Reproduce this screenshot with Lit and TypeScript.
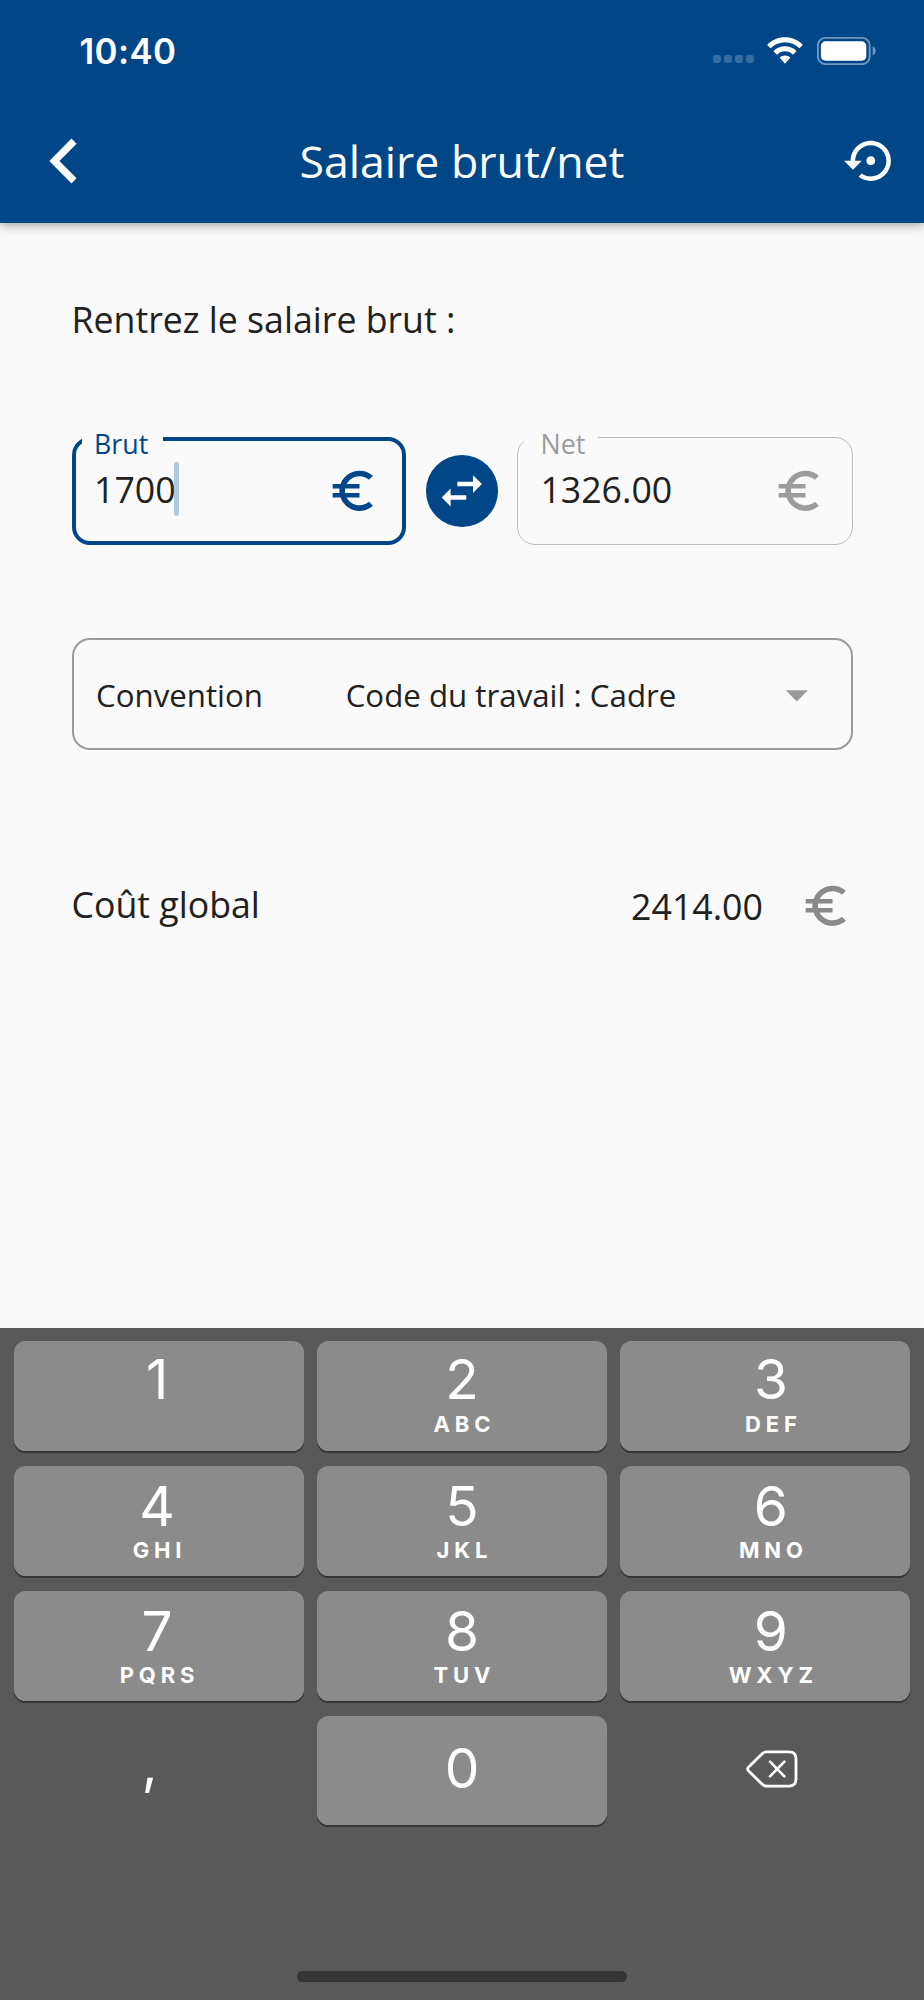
import { LitElement, html, css, svg } from "lit";
import { customElement, property } from "lit/decorators.js";
import { classMap } from "lit/directives/class-map.js";

const EURO =
  "M15 18.5c-2.51 0-4.68-1.42-5.76-3.5H15v-2H8.58c-.05-.33-.08-.66-.08-1s.03-.67.08-1H15V9H9.24C10.32 6.92 12.5 5.5 15 5.5c1.61 0 3.09.59 4.23 1.57L21 5.3C19.41 3.87 17.3 3 15 3c-3.92 0-7.24 2.51-8.48 6H3v2h3.06c-.04.33-.06.66-.06 1s.02.67.06 1H3v2h3.52c1.24 3.49 4.56 6 8.48 6 2.31 0 4.41-.87 6-2.3l-1.78-1.77c-1.13.98-2.6 1.57-4.22 1.57z";
const SWAP = "M6.99 11L3 15l3.99 4v-3H14v-2H6.99v-3zM21 9l-3.99-4v3H10v2h7.01v3L21 9z";
const RESTORE =
  "M14 12c0-1.1-.9-2-2-2s-2 .9-2 2 .9 2 2 2 2-.9 2-2zm-2-9c-4.97 0-9 4.03-9 9H0l4 4 4-4H5c0-3.87 3.13-7 7-7s7 3.13 7 7-3.13 7-7 7c-1.51 0-2.91-.49-4.06-1.3l-1.42 1.44C8.04 20.3 9.94 21 12 21c4.97 0 9-4.03 9-9s-4.03-9-9-9z";
const DROPDOWN = "M7 10l5 5 5-5z";

@customElement("md-icon")
class MdIcon extends LitElement {
  @property() path = "";
  static styles = css`
    :host { display: block; flex: none; width: 53.6px; height: 53.6px; }
    svg { display: block; width: 100%; height: 100%; fill: currentColor; }
  `;
  render() {
    return html`<svg viewBox="0 0 24 24">${svg`<path d=${this.path}></path>`}</svg>`;
  }
}

@customElement("status-bar")
class StatusBar extends LitElement {
  static styles = css`
    :host {
      display: flex; justify-content: space-between; align-items: center;
      height: 98.5px; box-sizing: border-box; padding: 2.6px 47.2px 0 79.5px; color: #fff;
    }
    .time { font: 600 34.8px/40px Inter, sans-serif; letter-spacing: 0.4px; }
    .right { display: flex; align-items: center; }
    svg { display: block; }
    .dots { display: flex; gap: 3.6px; margin: 17px 13.5px 0 0; }
    .dot { width: 7.5px; height: 7.5px; border-radius: 2.4px; background: #356ca0; }
    .wifi { margin-right: 13.5px; }
  `;
  render() {
    return html`
      <div class="time">10:40</div>
      <div class="right">
        <div class="dots">${[0, 1, 2, 3].map(() => html`<div class="dot"></div>`)}</div>
        <svg class="wifi" width="36" height="27" viewBox="0 0 36 27" fill="#fff">
          <path d="M18 0.2C24.9 0.2 31 2.9 35.5 7.4Q35.9 7.8 35.5 8.2L32.8 10.9Q32.4 11.3 32 10.9C28.3 7.3 23.4 5.2 18 5.2S7.7 7.3 4 10.9Q3.6 11.3 3.2 10.9L0.5 8.2Q0.1 7.8 0.5 7.4C5 2.9 11.1 0.2 18 0.2Z"></path>
          <path d="M18 9.3C22.4 9.3 26.3 11 29.2 13.8Q29.6 14.2 29.2 14.6L26.4 17.4Q26 17.7 25.6 17.4C23.6 15.5 20.9 14.3 18 14.3S12.4 15.5 10.4 17.4Q10 17.7 9.6 17.4L6.8 14.6Q6.4 14.2 6.8 13.8C9.7 11 13.6 9.3 18 9.3Z"></path>
          <path d="M18 18.4C20 18.4 21.7 19.1 23 20.2Q23.4 20.6 23 21L18.5 26.2Q18 26.7 17.5 26.2L13 21Q12.6 20.6 13 20.2C14.3 19.1 16 18.4 18 18.4Z"></path>
        </svg>
        <svg width="60" height="28" viewBox="0 0 60 28">
          <rect x="0.9" y="0.9" width="51.8" height="26.2" rx="7.6" fill="none" stroke="#7196bb" stroke-width="1.9"></rect>
          <rect x="3.9" y="4.3" width="45.4" height="19.4" rx="4.6" fill="#fff"></rect>
          <path d="M55.7 9.3C57.5 10.2 58.7 12 58.7 14S57.5 17.8 55.7 18.7Z" fill="#7196bb"></path>
        </svg>
      </div>
    `;
  }
}

@customElement("app-header")
class AppHeader extends LitElement {
  static styles = css`
    :host {
      display: block; height: 223px; background: #014788; color: #fff;
      box-shadow: 0 2px 10px rgba(0, 0, 0, 0.38);
    }
    .bar {
      display: grid; grid-template-columns: 1fr auto 1fr; align-items: center;
      height: 124.5px; box-sizing: border-box; padding: 0 26.5px;
    }
    .back { display: block; fill: #fff; margin-left: 22.5px; }
    .title { font: 400 44.64px/60px "Open Sans", sans-serif; white-space: nowrap; }
    .action { justify-self: end; }
  `;
  render() {
    return html`
      <status-bar></status-bar>
      <div class="bar">
        <svg class="back" width="28" height="46" viewBox="0 0 28 46">
          <path d="M0.3 23L22.5 0.6L27.6 5.7L10.4 23L27.6 40.3L22.5 45.4Z"></path>
        </svg>
        <div class="title">Salaire brut/net</div>
        <md-icon class="action" .path=${RESTORE}></md-icon>
      </div>
    `;
  }
}

@customElement("amount-field")
class AmountField extends LitElement {
  @property() label = "";
  @property() value = "";
  @property({ type: Boolean, reflect: true }) focused = false;
  static styles = css`
    :host {
      display: flex; justify-content: space-between; align-items: flex-start; position: relative;
      width: 335.5px; height: 107.6px; box-sizing: border-box; border-radius: 18px;
      border: 1.1px solid #bdbdbd; padding: 26px 25.5px 0 22.4px; color: #9c9c9c;
    }
    :host([focused]) { width: 334.5px; margin-right: 1px; border: 4px solid #014788; padding: 23px 22.5px 0 18.5px; color: #014788; }
    .label {
      position: absolute; left: 5.5px; top: -11px; padding: 0 13px 0 17px; background: #fafafa;
      font: 400 26.8px/34px "Open Sans", sans-serif;
    }
    :host([focused]) .label { left: 6.5px; top: -14px; padding: 0 14.5px 0 12px; }
    .entry { display: flex; align-items: center; height: 53.6px; }
    .value { font: 400 35.7px/48px "Open Sans", sans-serif; color: #212121; transform: translateY(-2px); }
    .caret { width: 4.6px; height: 53.6px; border-radius: 2.3px; background: #b2c8db; margin-left: -1.5px; transform: translateY(-2px); }
  `;
  render() {
    return html`
      <span class="label">${this.label}</span>
      <div class="entry">
        <span class="value">${this.value}</span>
        ${this.focused ? html`<span class="caret"></span>` : ""}
      </div>
      <md-icon .path=${EURO}></md-icon>
    `;
  }
}

interface Key { digit: string; letters?: string; kind?: "plain" | "zero" | "delete" }

const KEYS: Key[] = [
  { digit: "1" },
  { digit: "2", letters: "ABC" },
  { digit: "3", letters: "DEF" },
  { digit: "4", letters: "GHI" },
  { digit: "5", letters: "JKL" },
  { digit: "6", letters: "MNO" },
  { digit: "7", letters: "PQRS" },
  { digit: "8", letters: "TUV" },
  { digit: "9", letters: "WXYZ" },
  { digit: ",", kind: "plain" },
  { digit: "0", kind: "zero" },
  { digit: "", kind: "delete" },
];

@customElement("number-pad")
class NumberPad extends LitElement {
  static styles = css`
    :host {
      display: flex; flex-direction: column; justify-content: space-between; align-items: center;
      height: 672px; box-sizing: border-box; padding: 13.3px 13.6px 18px; background: #595959; color: #fff;
    }
    .keys {
      display: grid; grid-template-columns: repeat(3, 1fr); grid-auto-rows: 109.5px;
      gap: 15.4px 13.4px; width: 100%;
    }
    .key {
      display: flex; flex-direction: column; align-items: center; box-sizing: border-box;
      padding-top: 9.7px; border-radius: 11.5px; background: #8b8b8b; box-shadow: 0 2px 0 #353535;
    }
    .key.top { padding-top: 7.3px; }
    .key.left { padding-right: 3px; }
    .key.right { padding-left: 11px; }
    .key.plain, .key.delete { background: none; box-shadow: none; }
    .key.zero { padding-top: 22px; }
    .key.plain { padding: 17px 18px 0 0; }
    .key.delete { padding: 33.6px 0 0 12.6px; }
    .digit { font: 400 55px/60px Inter, sans-serif; }
    .letters {
      font: 700 22px/24px Inter, sans-serif; letter-spacing: 4.9px; margin: 1.8px -4.9px 0 0;
    }
    .key.top .letters { margin-top: 3.8px; }
    .home { width: 330px; height: 11px; border-radius: 5.5px; background: #353535; }
    svg { display: block; fill: none; stroke: #fff; stroke-linecap: round; stroke-linejoin: round; }
  `;
  renderKey(key: Key, index: number) {
    const classes = {
      key: true,
      top: index < 3,
      left: index % 3 === 0,
      right: index % 3 === 2,
      plain: key.kind === "plain",
      zero: key.kind === "zero",
      delete: key.kind === "delete",
    };
    return html`<div class=${classMap(classes)}>
      ${key.kind === "delete"
        ? html`<svg width="52" height="38" viewBox="0 0 52 38">
            <path stroke-width="2.8" d="M20.5 1.9H42.8C47.5 1.9 50 4.2 50 8.7V29.3C50 33.8 47.5 36.1 42.8 36.1H20.5C18.7 36.1 17.4 35.5 16.2 34.3L2.2 20.4Q1 19 2.2 17.6L16.2 3.7C17.4 2.5 18.7 1.9 20.5 1.9Z"></path>
            <path stroke-width="2.7" d="M24 11.6L38.4 26.4M38.4 11.6L24 26.4"></path>
          </svg>`
        : html`<span class="digit">${key.digit}</span>`}
      ${key.letters ? html`<span class="letters">${key.letters}</span>` : ""}
    </div>`;
  }
  render() {
    return html`
      <div class="keys">${KEYS.map((k, i) => this.renderKey(k, i))}</div>
      <div class="home"></div>
    `;
  }
}

@customElement("app-root")
class AppRoot extends LitElement {
  static styles = css`
    :host {
      display: flex; flex-direction: column; height: 2000px; background: #fafafa;
      color: #212121; font-family: "Open Sans", sans-serif; overflow: hidden;
    }
    .content { flex: 1; display: flex; flex-direction: column; padding: 71.5px 71.5px 0; }
    .prompt { font-size: 35.7px; line-height: 48.6px; }
    .fields { display: flex; justify-content: space-between; align-items: center; margin-top: 94px; }
    .swap {
      display: flex; align-items: center; justify-content: center; width: 71.6px; height: 71.6px;
      border-radius: 50%; background: #014788; color: #fff;
    }
    .select {
      display: flex; align-items: center; height: 111.5px; box-sizing: border-box; margin-top: 93.7px;
      border: 2.2px solid #9b9b9b; border-radius: 18px; padding: 1px 26.5px 0 22.5px;
      font-size: 31.25px; line-height: 44px; white-space: nowrap;
    }
    .name { width: 249.7px; }
    .option { flex: 1; }
    .arrow { color: #9a9a9a; }
    .cost { display: flex; align-items: center; margin-top: 129.4px; font-size: 35.7px; line-height: 48.6px; }
    .caption { flex: 1; padding-bottom: 4px; }
    .euro { color: #8a8a8a; margin-left: 36px; }
  `;
  render() {
    return html`
      <app-header></app-header>
      <main class="content">
        <div class="prompt">Rentrez le salaire brut :</div>
        <div class="fields">
          <amount-field label="Brut" value="1700" focused></amount-field>
          <div class="swap"><md-icon .path=${SWAP}></md-icon></div>
          <amount-field label="Net" value="1326.00"></amount-field>
        </div>
        <div class="select">
          <span class="name">Convention</span>
          <span class="option">Code du travail : Cadre</span>
          <md-icon class="arrow" .path=${DROPDOWN}></md-icon>
        </div>
        <div class="cost">
          <span class="caption">Coût global</span>
          <span>2414.00</span>
          <md-icon class="euro" .path=${EURO}></md-icon>
        </div>
      </main>
      <number-pad></number-pad>
    `;
  }
}
